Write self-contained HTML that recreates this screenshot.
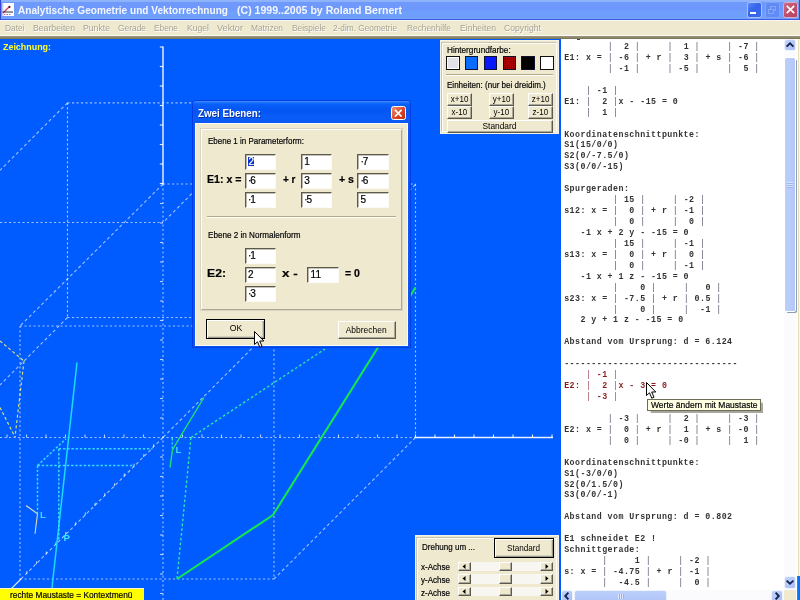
<!DOCTYPE html><html><head><meta charset="utf-8"><title>Analytische Geometrie</title><style>
*{box-sizing:border-box;margin:0;padding:0}
html,body{width:800px;height:600px;overflow:hidden;background:#EFE9D0;font-family:"Liberation Sans",sans-serif;}
body{position:relative}
#root{position:absolute;left:0;top:0;width:800px;height:600px;will-change:transform;overflow:hidden}
.abs{position:absolute}
#title{left:0;top:0;width:800px;height:20px;background:linear-gradient(#90b5fc 0,#8db2fc 1.6px,#7099fc 2.4px,#6f98fc 10px,#6e9ffc 12px,#6ea0fc 18.8px,#3c5ce4 19.2px,#3c5ce4 20px);}
#title .t{position:absolute;left:18px;top:2.6px;font-size:11.2px;font-weight:bold;color:#f4f7ff;white-space:pre;letter-spacing:0;line-height:15px;transform-origin:0 50%}
#menu{left:0;top:20px;width:800px;height:16px;background:linear-gradient(#f8f6ee 0,#f8f6ee 1px,#EFE9D0 1px)}
#menu span{position:absolute;top:2.2px;font-size:9.8px;line-height:11px;color:#a6a28e;text-shadow:0.6px 0.6px 0 #fff;white-space:nowrap;transform-origin:0 50%}
#sep{left:0;top:35px;width:800px;height:4px;background:linear-gradient(#fbfaf4 0,#fbfaf4 1px,#9a957c 1px,#8a8468 3px,#6d6a58 4px)}
#draw{left:0;top:39px;width:561px;height:561px;background:#005CFF;overflow:hidden}
#txt{left:561px;top:38.5px;width:223px;height:551.7px;background:#fff;overflow:hidden}
#txt pre{position:absolute;left:3.2px;top:3.5px;font-family:"Liberation Mono",monospace;font-weight:bold;font-size:8.3px;letter-spacing:0.45px;line-height:10.935px;color:#333;white-space:pre}
#txt pre .r{color:#8a1a1a}
#txt pre i{font-style:normal;font-weight:normal;color:#5c566e}
#txt pre .r i{color:#9a4a5a}
.lbl{font-size:9.6px;-webkit-text-stroke:0.2px #000;line-height:11px;color:#000;white-space:nowrap;position:absolute;transform-origin:0 50%}
.btn{position:absolute;background:#EFE9D0;border:1px solid;border-color:#fff #5c5a50 #5c5a50 #fff;box-shadow:inset -1px -1px 0 #aca899;font-size:9.6px;line-height:10px;text-align:center;color:#000;white-space:nowrap}
.panel{position:absolute;background:#EFE9D0}
.inp{position:absolute;background:#fff;border:1px solid;border-color:#5e5a48 #fbfaf4 #fbfaf4 #5e5a48;box-shadow:inset 0.6px 0.6px 0 #8a887c;font-size:10px;-webkit-text-stroke:0.2px #000;line-height:12px;padding:0.5px 0 0 2.6px;color:#000}
.etch{position:absolute;height:2px;border-top:1px solid #b4a888;border-bottom:1px solid #fff}
</style></head><body><div id="root">
<div id="title" class="abs">
<div class="abs" style="left:0;top:0;width:1px;height:20px;background:#3048d8"></div>
<svg class="abs" style="left:2px;top:3px" width="12" height="13" viewBox="0 0 12 13"><rect width="12" height="13" fill="#fff"/><rect x="0" y="0" width="1.5" height="13" fill="#c8c8e8"/><path d="M1 10 L8 3" stroke="#e03060" stroke-width="1.2"/><path d="M0.5 9 H11" stroke="#303030" stroke-width="1"/><circle cx="7.5" cy="4" r="1" fill="#202020"/><path d="M2 11.5 H9" stroke="#b04090" stroke-width="0.8" stroke-dasharray="1.5 1"/></svg>
<span class="t" id="tt1" style="transform:scaleX(0.9007);">Analytische Geometrie und Vektorrechnung</span>
<span class="t" id="tt2" style="left:237px;transform:scaleX(0.9444);">(C) 1999..2005 by Roland Bernert</span>
<div class="abs" style="left:746.6px;top:2px;width:15.2px;height:15.6px;border-radius:2.5px;border:1px solid #a9c1fc;background:linear-gradient(135deg,#5a86f4 0,#3464ea 45%,#3a6cee 100%)"><div class="abs" style="left:2.6px;top:9px;width:5.8px;height:2px;background:#fff"></div></div>
<div class="abs" style="left:764.7px;top:2px;width:15px;height:15.6px;border-radius:2.5px;border:1px solid #7ea2f8;background:#618af4"><div class="abs" style="left:4.8px;top:2.6px;width:5.6px;height:5px;border:1px solid #82a6f8;border-top-width:1.6px"></div><div class="abs" style="left:2.4px;top:5.6px;width:5.6px;height:5px;border:1px solid #82a6f8;border-top-width:1.6px;background:#618af4"></div></div>
<div class="abs" style="left:782.7px;top:2px;width:15.5px;height:15.6px;border-radius:2.5px;border:1px solid #dcaac6;background:linear-gradient(135deg,#cc6a84,#bc4c68 60%,#b84460)"><svg class="abs" style="left:2.2px;top:2.4px" width="9" height="9" viewBox="0 0 9 9"><path d="M0.8 0.8 L8.2 8.2 M8.2 0.8 L0.8 8.2" stroke="#fff" stroke-width="1.7"/></svg></div>
<div class="abs" style="left:798.8px;top:0;width:1.2px;height:20px;background:#3448dc"></div>
</div>
<div id="menu" class="abs">
<span id="m0" style="left:5px;transform:scaleX(0.8525);">Datei</span>
<span id="m1" style="left:33px;transform:scaleX(0.8863);">Bearbeiten</span>
<span id="m2" style="left:83px;transform:scaleX(0.8848);">Punkte</span>
<span id="m3" style="left:118px;transform:scaleX(0.8566);">Gerade</span>
<span id="m4" style="left:154px;transform:scaleX(0.8467);">Ebene</span>
<span id="m5" style="left:187px;transform:scaleX(0.8778);">Kugel</span>
<span id="m6" style="left:217px;transform:scaleX(0.9359);">Vektor</span>
<span id="m7" style="left:251px;transform:scaleX(0.8516);">Matrizen</span>
<span id="m8" style="left:292px;transform:scaleX(0.8550);">Beispiele</span>
<span id="m9" style="left:333px;transform:scaleX(0.8456);">2-dim. Geometrie</span>
<span id="m10" style="left:407px;transform:scaleX(0.8502);">Rechenhilfe</span>
<span id="m11" style="left:460px;transform:scaleX(0.8811);">Einheiten</span>
<span id="m12" style="left:504px;transform:scaleX(0.8823);">Copyright</span>
</div>
<div id="sep" class="abs"></div>
<div id="draw" class="abs">
<svg class="abs" style="left:0;top:0" width="561" height="561" viewBox="0 39 561 561" fill="none">
<g stroke="#ffffff" stroke-opacity="0.62" stroke-width="1.15" stroke-dasharray="2.1 2.4">
<path d="M67.5 102.8 L330 102.8"/>
<path d="M67.5 102.8 L67.5 317.5"/>
<path d="M163 184 L415.5 184"/>
<path d="M415.5 184 L415.5 437.5"/>
<path d="M0 222.5 L163 222.5"/>
<path d="M67.5 317.5 L330 317.5"/>
<path d="M20 326 L330 326"/>
<path d="M20 326 L20 579"/>
<path d="M20 579 L274 579"/>
<path d="M274 300 L274 579"/>
<path d="M163 184 L163 600"/>
<path d="M0 437.5 L415.5 437.5"/>
</g>
<g stroke="#ffffff" stroke-opacity="0.62" stroke-width="1.1" stroke-dasharray="3.2 2.6">
<path d="M67.5 102.8 L0 170.3"/>
<path d="M163 184 L20 326"/>
<path d="M200 185.5 L163 222.5"/>
<path d="M67.5 317.5 L0 385"/>
<path d="M415.5 184.5 L163 437.5"/>
<path d="M163 437.5 L21 579"/>
<path d="M415.5 437.5 L274 579"/>
</g>
<g stroke="#ffffff" stroke-opacity="0.92" stroke-width="1.45">
<path d="M163 46.5 L163 184"/>
<path d="M415.5 437.5 L553 437.5"/>
</g>
<g stroke="#ffffff" stroke-opacity="0.85" stroke-width="1.2">
<path d="M21 579 L0 600"/>
</g>
<g stroke="#ffffff" stroke-opacity="0.9" stroke-width="1.1">
<path d="M159.8 47.0 L163 47.0"/>
<path d="M159.8 66.5 L163 66.5"/>
<path d="M159.8 86.0 L163 86.0"/>
<path d="M159.8 105.5 L163 105.5"/>
<path d="M159.8 125.0 L163 125.0"/>
<path d="M159.8 144.5 L163 144.5"/>
<path d="M159.8 164.0 L163 164.0"/>
<path d="M159.8 183.5 L163 183.5"/>
<path d="M415.5 434.5 L415.5 438.0"/>
<path d="M435.0 434.5 L435.0 438.0"/>
<path d="M454.5 434.5 L454.5 438.0"/>
<path d="M474.0 434.5 L474.0 438.0"/>
<path d="M493.5 434.5 L493.5 438.0"/>
<path d="M513.0 434.5 L513.0 438.0"/>
<path d="M532.5 434.5 L532.5 438.0"/>
<path d="M552.0 434.5 L552.0 438.0"/>
</g>
<g stroke="#ffffff" stroke-opacity="0.7" stroke-width="1.1">
<path d="M160 418.0 L163 418.0"/>
<path d="M160 398.5 L163 398.5"/>
<path d="M160 379.0 L163 379.0"/>
<path d="M160 359.5 L163 359.5"/>
<path d="M160 340.0 L163 340.0"/>
<path d="M160 320.5 L163 320.5"/>
<path d="M160 301.0 L163 301.0"/>
<path d="M160 281.5 L163 281.5"/>
<path d="M160 262.0 L163 262.0"/>
<path d="M160 242.5 L163 242.5"/>
<path d="M160 223.0 L163 223.0"/>
<path d="M160 203.5 L163 203.5"/>
<path d="M160 457.0 L163 457.0"/>
<path d="M160 476.5 L163 476.5"/>
<path d="M160 496.0 L163 496.0"/>
<path d="M160 515.5 L163 515.5"/>
<path d="M160 535.0 L163 535.0"/>
<path d="M160 554.5 L163 554.5"/>
<path d="M160 574.0 L163 574.0"/>
<path d="M160 593.5 L163 593.5"/>
<path d="M182.5 434.5 L182.5 437.5"/>
<path d="M202.0 434.5 L202.0 437.5"/>
<path d="M221.5 434.5 L221.5 437.5"/>
<path d="M241.0 434.5 L241.0 437.5"/>
<path d="M260.5 434.5 L260.5 437.5"/>
<path d="M280.0 434.5 L280.0 437.5"/>
<path d="M299.5 434.5 L299.5 437.5"/>
<path d="M319.0 434.5 L319.0 437.5"/>
<path d="M338.5 434.5 L338.5 437.5"/>
<path d="M358.0 434.5 L358.0 437.5"/>
<path d="M377.5 434.5 L377.5 437.5"/>
<path d="M397.0 434.5 L397.0 437.5"/>
<path d="M143.5 434.5 L143.5 437.5"/>
<path d="M124.0 434.5 L124.0 437.5"/>
<path d="M104.5 434.5 L104.5 437.5"/>
<path d="M85.0 434.5 L85.0 437.5"/>
<path d="M65.5 434.5 L65.5 437.5"/>
<path d="M46.0 434.5 L46.0 437.5"/>
<path d="M26.5 434.5 L26.5 437.5"/>
<path d="M7.0 434.5 L7.0 437.5"/>
<path d="M153.25 447.25 L153.75 444.25"/>
<path d="M143.5 457.0 L144.0 454.0"/>
<path d="M133.75 466.75 L134.25 463.75"/>
<path d="M124.0 476.5 L124.5 473.5"/>
<path d="M114.25 486.25 L114.75 483.25"/>
<path d="M104.5 496.0 L105.0 493.0"/>
<path d="M94.75 505.75 L95.25 502.75"/>
<path d="M85.0 515.5 L85.5 512.5"/>
<path d="M75.25 525.25 L75.75 522.25"/>
<path d="M65.5 535.0 L66.0 532.0"/>
<path d="M55.75 544.75 L56.25 541.75"/>
<path d="M46.0 554.5 L46.5 551.5"/>
<path d="M36.25 564.25 L36.75 561.25"/>
<path d="M26.5 574.0 L27.0 571.0"/>
</g>
<g stroke="#f8f268" stroke-opacity="0.9" stroke-width="1.15" stroke-dasharray="3 2.4">
<path d="M0 341 L24 361"/>
<path d="M24 361 L15 437"/>
<path d="M0 407.5 L15 437"/>
</g>
<g stroke="#f0eec0" stroke-opacity="0.9" stroke-width="1.1">
<path d="M26 505.5 L37.5 513.8"/>
<path d="M37.5 513.8 L35 533.8"/>
</g>
<g stroke="#18dcfa" stroke-width="1.5">
<path d="M77 362.5 L51.5 592"/>
</g>
<g stroke="#38e0f4" stroke-opacity="0.95" stroke-width="1.5" stroke-dasharray="2.4 1.8">
<path d="M58.8 448.8 L152.5 448.8"/>
<path d="M37.5 465.5 L132.5 465.5"/>
<path d="M37.5 465.5 L66 438.8"/>
<path d="M37.5 465.5 L37.5 513.8"/>
<path d="M58.8 448.8 L58.8 541"/>
</g>
<g stroke="#2cecaa" stroke-opacity="0.95" stroke-width="1.4" stroke-dasharray="2.6 2.2">
<path d="M191 437.5 L325 349"/>
<path d="M191 437.5 L177 579"/>
</g>
<path d="M172.3 438 L172.3 449.5" stroke="#38e0f4" stroke-width="1.3" stroke-dasharray="2.4 1.8"/>
<g stroke="#20e468" stroke-width="1.4" stroke-linejoin="round">
<path d="M204 397.5 L180 437 L172.5 450 L170 467.5"/>
</g>
<path d="M415.5 287.5 L273 515 L177 579" stroke="#14e84a" stroke-width="2.1" stroke-linejoin="round"/>
</svg>
<div class="abs" style="left:3px;top:2.2px;font-size:9.8px;line-height:11px;font-weight:bold;color:#ffff38;white-space:nowrap;transform-origin:0 50%;transform:scaleX(0.9091);" id="zeich">Zeichnung:</div>
<div class="abs" style="left:40px;top:471.2px;font-size:9.6px;line-height:10px;font-weight:bold;color:#38dcff">L</div>
<div class="abs" style="left:175.5px;top:406.3px;font-size:9.6px;line-height:10px;font-weight:bold;color:#38dcff">L</div>
<div class="abs" style="left:63.5px;top:493.8px;font-size:9.6px;line-height:10px;font-weight:bold;color:#38e8ff">P</div>
<div class="abs" style="left:0;top:549.3px;width:143.5px;height:12px;background:#ffff00;border-top:0.6px solid #f8f8d0"><span class="lbl" id="status" style="left:9.5px;top:-0.2px;font-size:9.8px;transform:scaleX(0.8504);">rechte Maustaste = Kontextmenü</span></div>
</div>
<div class="panel" style="left:439.8px;top:40.2px;width:119.2px;height:94px;border:1px solid #f6f3e6"></div>
<div class="abs" style="left:441.4px;top:41.9px;width:116px;height:90.6px;border:1px solid;border-color:#c9c4ae #fdfcf6 #fdfcf6 #c9c4ae;box-shadow:inset 1px 1px 0 #fdfcf6"></div>
<div class="abs" style="left:441px;top:41px;width:118px;height:93px;border:1px solid transparent">
<span class="lbl" id="hg" style="left:4.6px;top:1.9px;transform:scaleX(0.8531);">Hintergrundfarbe:</span>
<div class="abs" style="left:3.8px;top:13.8px;width:13.8px;height:14px;background:#e2e2e8;border:1.1px solid #101010;box-shadow:inset 0 0 0 1px #fff;"></div>
<div class="abs" style="left:22.6px;top:13.8px;width:13.8px;height:14px;background:#0a6cff;border:1.1px solid #101030;"></div>
<div class="abs" style="left:41.6px;top:13.8px;width:13.8px;height:14px;background:#0818ff;border:1.1px solid #101030;"></div>
<div class="abs" style="left:60.5px;top:13.8px;width:13.8px;height:14px;background:#a80000;border:1.1px solid #101030;outline:1px dotted #400000;outline-offset:-3px;"></div>
<div class="abs" style="left:79.3px;top:13.8px;width:13.8px;height:14px;background:#000000;border:1.1px solid #101030;"></div>
<div class="abs" style="left:98.2px;top:13.8px;width:13.8px;height:14px;background:#ffffff;border:1.1px solid #101010;"></div>
<div class="etch" style="left:4px;top:32.3px;width:107px"></div>
<span class="lbl" id="einh" style="left:4.6px;top:36.6px;transform:scaleX(0.8383);">Einheiten: (nur bei dreidim.)</span>
<div class="btn" style="left:4.5px;top:51px;width:25.5px;height:12.5px;"><span id="b1" style="display:inline-block;transform-origin:50% 50%;transform:scaleX(0.8350);">x+10</span></div>
<div class="btn" style="left:4.5px;top:64px;width:25.5px;height:12.5px;"><span id="b2" style="display:inline-block;transform-origin:50% 50%;transform:scaleX(0.8301);">x-10</span></div>
<div class="btn" style="left:46.5px;top:51px;width:25.5px;height:12.5px;"><span id="b3" style="display:inline-block;transform-origin:50% 50%;transform:scaleX(0.8350);">y+10</span></div>
<div class="btn" style="left:46.5px;top:64px;width:25.5px;height:12.5px;"><span id="b4" style="display:inline-block;transform-origin:50% 50%;transform:scaleX(0.8301);">y-10</span></div>
<div class="btn" style="left:85.5px;top:51px;width:25.5px;height:12.5px;"><span id="b5" style="display:inline-block;transform-origin:50% 50%;transform:scaleX(0.8350);">z+10</span></div>
<div class="btn" style="left:85.5px;top:64px;width:25.5px;height:12.5px;"><span id="b6" style="display:inline-block;transform-origin:50% 50%;transform:scaleX(0.8301);">z-10</span></div>
<div class="btn" style="left:4.5px;top:78px;width:106.5px;height:13px;"><span id="b7" style="display:inline-block;transform-origin:50% 50%;transform:scaleX(0.8732);">Standard</span></div>
</div>
<div class="panel" style="left:414.8px;top:535px;width:144.2px;height:66px;border:1px solid #f6f3e6"></div>
<div class="abs" style="left:416.3px;top:536.7px;width:141px;height:66px;border:1px solid;border-color:#c9c4ae #fdfcf6 #fdfcf6 #c9c4ae;box-shadow:inset 1px 1px 0 #fdfcf6"></div>
<div class="abs" style="left:415px;top:535px;width:144px;height:66px;border:1px solid transparent">
<span class="lbl" id="dreh" style="left:5.6px;top:5.2px;transform:scaleX(0.8351);">Drehung um ...</span>
<div class="btn" style="left:78px;top:2px;width:59.5px;height:20px;border:1px solid #000;box-shadow:inset 1px 1px 0 #fff,inset -1px -1px 0 #9a988a,inset -2px -2px 0 #d4d0c0;line-height:17px"><span id="b8" style="display:inline-block;transform-origin:50% 50%;transform:scaleX(0.8475);">Standard</span></div>
<span class="lbl" id="ach0" style="left:5.4px;top:24.9px;transform:scaleX(0.8368);">x-Achse</span>
<div class="abs" style="left:42.4px;top:25.6px;width:94.6px;height:9.2px;background:#f7f6f0">
<div class="btn" style="left:0;top:0;width:13px;height:9.2px"></div><svg class="abs" style="left:4px;top:2.1px" width="4" height="5"><path d="M3.5 0 L0.5 2.5 L3.5 5Z" fill="#000"/></svg>
<div class="btn" style="left:81.6px;top:0;width:13px;height:9.2px"></div><svg class="abs" style="left:86.6px;top:2.1px" width="4" height="5"><path d="M0.5 0 L3.5 2.5 L0.5 5Z" fill="#000"/></svg>
<div class="btn" style="left:40.6px;top:0;width:13.4px;height:9.2px"></div>
</div>
<span class="lbl" id="ach1" style="left:5.4px;top:37.6px;transform:scaleX(0.8368);">y-Achse</span>
<div class="abs" style="left:42.4px;top:38.4px;width:94.6px;height:9.2px;background:#f7f6f0">
<div class="btn" style="left:0;top:0;width:13px;height:9.2px"></div><svg class="abs" style="left:4px;top:2.1px" width="4" height="5"><path d="M3.5 0 L0.5 2.5 L3.5 5Z" fill="#000"/></svg>
<div class="btn" style="left:81.6px;top:0;width:13px;height:9.2px"></div><svg class="abs" style="left:86.6px;top:2.1px" width="4" height="5"><path d="M0.5 0 L3.5 2.5 L0.5 5Z" fill="#000"/></svg>
<div class="btn" style="left:40.6px;top:0;width:13.4px;height:9.2px"></div>
</div>
<span class="lbl" id="ach2" style="left:5.4px;top:50.6px;transform:scaleX(0.8368);">z-Achse</span>
<div class="abs" style="left:42.4px;top:51.1px;width:94.6px;height:9.2px;background:#f7f6f0">
<div class="btn" style="left:0;top:0;width:13px;height:9.2px"></div><svg class="abs" style="left:4px;top:2.1px" width="4" height="5"><path d="M3.5 0 L0.5 2.5 L3.5 5Z" fill="#000"/></svg>
<div class="btn" style="left:81.6px;top:0;width:13px;height:9.2px"></div><svg class="abs" style="left:86.6px;top:2.1px" width="4" height="5"><path d="M0.5 0 L3.5 2.5 L0.5 5Z" fill="#000"/></svg>
<div class="btn" style="left:40.6px;top:0;width:13.4px;height:9.2px"></div>
</div>
</div>
<div id="txt" class="abs"><div class="abs" style="left:15.5px;top:0.6px;width:3px;height:1px;background:#444"></div><pre>
        <i>|</i>  2 <i>|</i>     <i>|</i>  1 <i>|</i>     <i>|</i> -7 <i>|</i>
E1: x = <i>|</i> -6 <i>|</i> + r <i>|</i>  3 <i>|</i> + s <i>|</i> -6 <i>|</i>
        <i>|</i> -1 <i>|</i>     <i>|</i> -5 <i>|</i>     <i>|</i>  5 <i>|</i>

    <i>|</i> -1 <i>|</i>
E1: <i>|</i>  2 <i>|</i>x - -15 = 0
    <i>|</i>  1 <i>|</i>

Koordinatenschnittpunkte:
S1(15/0/0)
S2(0/-7.5/0)
S3(0/0/-15)

Spurgeraden:
         <i>|</i> 15 <i>|</i>     <i>|</i> -2 <i>|</i>
s12: x = <i>|</i>  0 <i>|</i> + r <i>|</i> -1 <i>|</i>
         <i>|</i>  0 <i>|</i>     <i>|</i>  0 <i>|</i>
   -1 x + 2 y - -15 = 0
         <i>|</i> 15 <i>|</i>     <i>|</i> -1 <i>|</i>
s13: x = <i>|</i>  0 <i>|</i> + r <i>|</i>  0 <i>|</i>
         <i>|</i>  0 <i>|</i>     <i>|</i> -1 <i>|</i>
   -1 x + 1 z - -15 = 0
         <i>|</i>    0 <i>|</i>     <i>|</i>   0 <i>|</i>
s23: x = <i>|</i> -7.5 <i>|</i> + r <i>|</i> 0.5 <i>|</i>
         <i>|</i>    0 <i>|</i>     <i>|</i>  -1 <i>|</i>
   2 y + 1 z - -15 = 0

Abstand vom Ursprung: d = 6.124

--------------------------------
<span class=r>    <i>|</i> -1 <i>|</i></span>
<span class=r>E2: <i>|</i>  2 <i>|</i>x - 3 = 0</span>
<span class=r>    <i>|</i> -3 <i>|</i></span>

        <i>|</i> -3 <i>|</i>     <i>|</i>  2 <i>|</i>     <i>|</i> -3 <i>|</i>
E2: x = <i>|</i>  0 <i>|</i> + r <i>|</i>  1 <i>|</i> + s <i>|</i> -0 <i>|</i>
        <i>|</i>  0 <i>|</i>     <i>|</i> -0 <i>|</i>     <i>|</i>  1 <i>|</i>

Koordinatenschnittpunkte:
S1(-3/0/0)
S2(0/1.5/0)
S3(0/0/-1)

Abstand vom Ursprung: d = 0.802

E1 schneidet E2 !
Schnittgerade:
       <i>|</i>     1 <i>|</i>     <i>|</i> -2 <i>|</i>
s: x = <i>|</i> -4.75 <i>|</i> + r <i>|</i> -1 <i>|</i>
       <i>|</i>  -4.5 <i>|</i>     <i>|</i>  0 <i>|</i>
</pre></div>
<div class="abs" style="left:784px;top:38.5px;width:12.3px;height:552px;background:#fbfbfd"></div>
<div class="abs" style="left:796.3px;top:38.5px;width:3.7px;height:562px;background:linear-gradient(90deg,#fdfdfb 0,#fdfdfb 1.6px,#e6dfbc 1.9px,#e6dfbc 3px,#fbfaf2 3.2px)"></div>
<div class="abs" style="left:785px;top:40px;width:10px;height:10.3px;border-radius:1.5px;background:linear-gradient(135deg,#c3d3fb,#a9bff6);box-shadow:0 0 0 0.6px #e4ebfd"></div>
<svg class="abs" style="left:785px;top:40px" width="10" height="10" fill="none"><path d="M1.6 6.6 L5 3.4 L8.4 6.6" stroke="#17244f" stroke-width="1.9"/></svg>
<div class="abs" style="left:785px;top:577.3px;width:10px;height:10.3px;border-radius:1.5px;background:linear-gradient(135deg,#c3d3fb,#a9bff6);box-shadow:0 0 0 0.6px #e4ebfd"></div>
<svg class="abs" style="left:785px;top:577.3px" width="10" height="10" fill="none"><path d="M1.6 3.6 L5 6.8 L8.4 3.6" stroke="#17244f" stroke-width="1.9"/></svg>
<div class="abs" style="left:784.8px;top:58px;width:10.2px;height:253px;border-radius:1.5px;background:linear-gradient(90deg,#bccefb,#b4c8f9);box-shadow:0 0 0 1px #fff,1.7px 1.7px 0 0.3px #8d9cb4"></div>
<div class="abs" style="left:787.4px;top:182px;width:5.2px;height:6.4px;background:repeating-linear-gradient(#e6eeff 0,#e6eeff 1px,#93abe4 1px,#93abe4 2px);opacity:.7"></div>
<div class="abs" style="left:561px;top:590.2px;width:223px;height:10px;background:#fbfbfd"></div>
<div class="abs" style="left:562px;top:591.2px;width:10px;height:10.3px;border-radius:1.5px;background:linear-gradient(135deg,#c3d3fb,#a9bff6);box-shadow:0 0 0 0.6px #e4ebfd"></div>
<svg class="abs" style="left:562px;top:591.2px" width="10" height="10" fill="none"><path d="M6.4 1.6 L3.2 5 L6.4 8.4" stroke="#17244f" stroke-width="1.9"/></svg>
<div class="abs" style="left:771.5px;top:591.2px;width:10px;height:10.3px;border-radius:1.5px;background:linear-gradient(135deg,#c3d3fb,#a9bff6);box-shadow:0 0 0 0.6px #e4ebfd"></div>
<svg class="abs" style="left:771.5px;top:591.2px" width="10" height="10" fill="none"><path d="M3.6 1.6 L6.8 5 L3.6 8.4" stroke="#17244f" stroke-width="1.9"/></svg>
<div class="abs" style="left:574.5px;top:591.2px;width:91.5px;height:10px;border-radius:1.5px;background:linear-gradient(#bdcffb,#b1c6f8);box-shadow:0 0 0 0.6px #e4ebfd"></div>
<div class="abs" style="left:618px;top:593.5px;width:6px;height:5px;background:repeating-linear-gradient(90deg,#e6eeff 0,#e6eeff 1px,#93abe4 1px,#93abe4 2px);opacity:.8"></div>
<div class="abs" style="left:784px;top:590.2px;width:12.3px;height:10px;background:#EFE9D0"></div>
<div class="abs" style="left:796.7px;top:575.7px;width:3.3px;height:25px;background:linear-gradient(90deg,#2b98ff 0,#0078ff 1px,#0070ff 3.3px)"></div>
<div class="abs" id="dlg" style="left:193px;top:101px;width:217px;height:246px;background:#0a58f4;border-radius:3px 3px 0 0;box-shadow:0 0 0 0.8px #0834dc">
<div class="abs" style="left:0;top:0;width:217px;height:22px;border-radius:3px 3px 0 0;background:linear-gradient(#3f8eff 0,#2478ff 1.2px,#0a60fc 3px,#0456f2 9px,#085cf8 17px,#0a58f4 22px)"></div>
<span class="abs" id="dt" style="left:5px;top:5.5px;font-size:10.5px;line-height:13px;font-weight:bold;color:#fff;text-shadow:0.8px 0.8px 0 #0a2c9c;white-space:nowrap;transform-origin:0 50%;transform:scaleX(0.9307);">Zwei Ebenen:</span>
<div class="abs" style="left:198px;top:4.5px;width:14.5px;height:14.5px;border-radius:2.5px;border:1px solid #fff;background:linear-gradient(135deg,#f09070,#d84020 60%,#c03010)"><svg class="abs" style="left:2px;top:2px" width="8.5" height="8.5" viewBox="0 0 9 9"><path d="M1 1 L8 8 M8 1 L1 8" stroke="#fff" stroke-width="1.8"/></svg></div>
<div class="abs" style="left:2.3px;top:21.8px;width:212.4px;height:223px;background:#EFE9D0;border:1px solid #fbfaf2"></div>
<div class="abs" style="left:8px;top:28px;width:201px;height:180.5px;border:1px solid;border-color:#fff #aca899 #aca899 #fff;box-shadow:0 0 0 1px #d8d4c4"></div>
<span class="lbl" id="e1p" style="left:14.5px;top:34px;;transform:scaleX(0.8334);">Ebene 1 in Parameterform:</span>
<span class="lbl" id="e2n" style="left:14.5px;top:127.5px;;transform:scaleX(0.8461);">Ebene 2 in Normalenform</span>
<span class="lbl" id="e1x" style="left:14px;top:72px;font-size:11.5px;font-weight:bold;line-height:13px;transform:scaleX(0.9223);">E1: x =</span>
<span class="lbl" id="pr" style="left:90px;top:72px;font-size:11.5px;font-weight:bold;line-height:13px;transform:scaleX(0.8686);">+ r</span>
<span class="lbl" id="ps" style="left:146px;top:72px;font-size:11.5px;font-weight:bold;line-height:13px;transform:scaleX(0.9195);">+ s</span>
<span class="lbl" id="e2l" style="left:14px;top:166px;font-size:11.5px;font-weight:bold;line-height:13px;transform:scaleX(1.0611);">E2:</span>
<span class="lbl" id="xm" style="left:89px;top:166px;font-size:11.5px;font-weight:bold;line-height:13px;transform:scaleX(1.1623);">x -</span>
<span class="lbl" id="eq0" style="left:152px;top:166px;font-size:11.5px;font-weight:bold;line-height:13px;transform:scaleX(0.9195);">= 0</span>
<div class="inp" style="left:51.5px;top:53px;width:31.5px;height:15.6px"><span style="display:inline-block;background:#0a32c8;color:#fff;padding:0 0.3px;line-height:9.7px;margin-top:1.2px;vertical-align:top;-webkit-text-stroke:0.2px #fff">2</span></div>
<div class="inp" style="left:107.75px;top:53px;width:31.5px;height:15.6px">1</div>
<div class="inp" style="left:164.0px;top:53px;width:31.5px;height:15.6px"><span style="letter-spacing:-1.1px">·</span>7</div>
<div class="inp" style="left:51.5px;top:72px;width:31.5px;height:15.6px"><span style="letter-spacing:-1.1px">·</span>6</div>
<div class="inp" style="left:107.75px;top:72px;width:31.5px;height:15.6px">3</div>
<div class="inp" style="left:164.0px;top:72px;width:31.5px;height:15.6px"><span style="letter-spacing:-1.1px">·</span>6</div>
<div class="inp" style="left:51.5px;top:91px;width:31.5px;height:15.6px"><span style="letter-spacing:-1.1px">·</span>1</div>
<div class="inp" style="left:107.75px;top:91px;width:31.5px;height:15.6px"><span style="letter-spacing:-1.1px">·</span>5</div>
<div class="inp" style="left:164.0px;top:91px;width:31.5px;height:15.6px">5</div>
<div class="inp" style="left:51.5px;top:147px;width:31.5px;height:15.6px"><span style="letter-spacing:-1.1px">·</span>1</div>
<div class="inp" style="left:51.5px;top:166px;width:31.5px;height:15.6px">2</div>
<div class="inp" style="left:51.5px;top:185px;width:31.5px;height:15.6px"><span style="letter-spacing:-1.1px">·</span>3</div>
<div class="inp" style="left:114px;top:166px;width:31.5px;height:15.6px">11</div>
<div class="etch" style="left:14px;top:115px;width:188.5px"></div>
<div class="btn" style="left:13px;top:218.3px;width:59px;height:19.7px;border:1px solid #000;box-shadow:inset 1px 1px 0 #fff,inset -1px -1px 0 #9a988a,inset -2px -2px 0 #d4d0c0;line-height:16.5px"><span id="b9" style="display:inline-block;transform-origin:50% 50%;transform:scaleX(0.9009);">OK</span></div>
<div class="btn" style="left:144.5px;top:219.5px;width:58px;height:18px;line-height:15px"><span id="b10" style="display:inline-block;transform-origin:50% 50%;transform:scaleX(0.8835);">Abbrechen</span></div>
</div>
<div class="abs" style="left:646.5px;top:398.7px;width:114.3px;height:12.3px;background:#ffffe4;border:1px solid #6e6c58;box-shadow:1.6px 1.6px 0.8px rgba(60,60,40,.45)"><span class="lbl" id="tip" style="left:3.2px;top:-0.3px;transform:scaleX(0.8850);">Werte ändern mit Maustaste</span></div>
<svg class="abs" style="left:253.6px;top:330.8px" width="11" height="18" viewBox="0 0 11 18"><path d="M0.5 0.5 L0.5 13.5 L3.5 10.8 L5.8 16.2 L8 15.2 L5.7 10 L9.8 10 Z" fill="#fff" stroke="#000" stroke-width="1" stroke-linejoin="round"/></svg>
<svg class="abs" style="left:646px;top:381.7px" width="11" height="18" viewBox="0 0 11 18"><path d="M0.5 0.5 L0.5 13.5 L3.5 10.8 L5.8 16.2 L8 15.2 L5.7 10 L9.8 10 Z" fill="#fff" stroke="#000" stroke-width="1" stroke-linejoin="round"/></svg>
</div></body></html>
